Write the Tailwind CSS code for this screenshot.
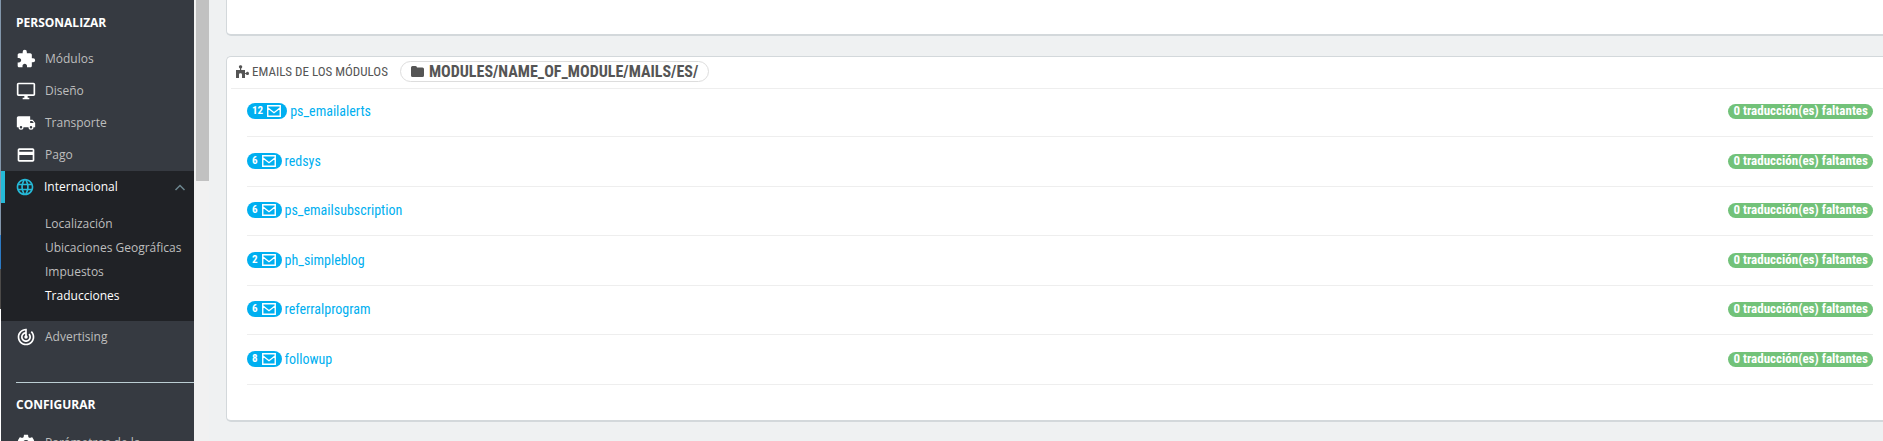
<!DOCTYPE html>
<html lang="es">
<head>
<meta charset="utf-8">
<meta name="viewport" content="width=device-width, initial-scale=1">
<title>Traducciones</title>
<script src="https://cdn.jsdelivr.net/npm/@tailwindcss/browser@4"></script>
</head>
<body class="flex h-screen overflow-hidden bg-[#eff1f2] font-['Ubuntu_Condensed','Roboto_Condensed','Liberation_Sans_Narrow','Open_Sans_Condensed',sans-serif] text-[#555]">
<svg class="hidden">
  <symbol id="mail" viewBox="0 0 14 12"><path d="M.75.75h12.5v10.5H.75zM1 3l6 4.7L13 3" fill="none" stroke="currentColor" stroke-width="1.4"/></symbol>
</svg>

<div class="flex w-px shrink-0 flex-col">
  <div class="h-[235px] bg-[#8296ab]"></div>
  <div class="h-[34px] bg-[#2c7ac4]"></div>
  <div class="h-10 bg-[#4c4a48]"></div>
  <div class="grow bg-white"></div>
</div>

<nav class="w-[193px] shrink-0 overflow-hidden bg-[#363a41] font-['Open_Sans',sans-serif] text-xs text-[#bebebe]">
  <h2 class="flex h-[43px] items-center pt-[2px] pl-[15px] font-bold text-white">PERSONALIZAR</h2>
  <a href="#" class="flex h-8 items-center gap-[9px] pl-[15px]"><svg class="size-5 text-white" viewBox="0 0 24 24" fill="currentColor"><path d="M20.5 11H19V7c0-1.1-.9-2-2-2h-4V3.5a2.5 2.5 0 0 0-5 0V5H4c-1.100 0-1.990.9-1.990 2v3.800H3.500c1.490 0 2.700 1.210 2.700 2.700s-1.210 2.700-2.700 2.700H2V20c0 1.100.9 2 2 2h3.800v-1.500c0-1.490 1.210-2.700 2.700-2.700s2.700 1.210 2.700 2.700V22H17c1.100 0 2-.9 2-2v-4h1.500a2.500 2.500 0 0 0 0-5z"/></svg>Módulos</a>
  <a href="#" class="flex h-8 items-center gap-[9px] pl-[15px]"><svg class="size-5 text-white" viewBox="0 0 24 24" fill="currentColor"><path d="M21 2H3c-1.100 0-2 .9-2 2v12c0 1.100.9 2 2 2h7v2H8v2h8v-2h-2v-2h7c1.100 0 2-.9 2-2V4c0-1.100-.9-2-2-2zm0 14H3V4h18v12z"/></svg>Diseño</a>
  <a href="#" class="flex h-8 items-center gap-[9px] pl-[15px]"><svg class="size-5 text-white" viewBox="0 0 24 24" fill="currentColor"><path d="M20 8h-3V4H3c-1.100 0-2 .9-2 2v11h2a3 3 0 0 0 6 0h6a3 3 0 0 0 6 0h2v-5l-3-4zM6 18.500a1.500 1.500 0 1 1 0-3 1.500 1.500 0 0 1 0 3zm13.500-9 1.960 2.500H17V9.500h2.500zm-1.500 9a1.500 1.500 0 1 1 0-3 1.500 1.500 0 0 1 0 3z"/></svg>Transporte</a>
  <a href="#" class="flex h-8 items-center gap-[9px] pl-[15px]"><svg class="size-5 text-white" viewBox="0 0 24 24" fill="currentColor"><path d="M20 4H4c-1.110 0-1.990.89-1.990 2L2 18c0 1.110.89 2 2 2h16c1.110 0 2-.89 2-2V6c0-1.110-.89-2-2-2zm0 14H4v-6h16v6zm0-10H4V6h16v2z"/></svg>Pago</a>
  <div class="h-[150px] bg-[#202226]">
    <a href="#" class="flex h-8 items-center gap-[9px] border-l-4 border-[#25b9d7] pr-2 pl-[10px] text-white"><svg class="size-5 text-[#25b9d7]" viewBox="0 0 24 24" fill="currentColor"><path d="M11.990 2C6.470 2 2 6.480 2 12s4.470 10 9.990 10C17.520 22 22 17.520 22 12S17.520 2 11.990 2zm6.930 6h-2.950c-.32-1.250-.78-2.450-1.380-3.560 1.840.63 3.370 1.910 4.330 3.560zM12 4.040c.83 1.200 1.480 2.530 1.910 3.960h-3.820c.43-1.430 1.080-2.760 1.910-3.960zM4.260 14C4.100 13.360 4 12.690 4 12s.1-1.360.26-2h3.380c-.08.66-.14 1.320-.14 2s.06 1.340.14 2H4.260zm.82 2h2.950c.32 1.250.78 2.450 1.380 3.560-1.840-.63-3.370-1.900-4.330-3.560zm2.950-8H5.080c.96-1.660 2.490-2.930 4.330-3.560C8.810 5.550 8.350 6.750 8.030 8zM12 19.960c-.83-1.200-1.480-2.530-1.910-3.960h3.820c-.43 1.430-1.080 2.760-1.910 3.960zM14.340 14H9.660c-.09-.66-.16-1.320-.16-2s.07-1.350.16-2h4.680c.09.65.16 1.320.16 2s-.07 1.340-.16 2zm.25 5.560c.6-1.110 1.060-2.310 1.380-3.560h2.950c-.96 1.650-2.490 2.930-4.330 3.560zM16.360 14c.08-.66.14-1.320.14-2s-.06-1.340-.14-2h3.380c.16.64.26 1.310.26 2s-.1 1.360-.26 2h-3.380z"/></svg>Internacional<svg class="ml-auto h-[7px] w-3 text-[#6c868e]" viewBox="0 0 12 7"><path d="m1.500 6 4.500-4.500L10.500 6" fill="none" stroke="currentColor" stroke-width="1.500"/></svg></a>
    <div class="flex flex-col pt-[9px] pl-11 leading-6 whitespace-nowrap">
      <a href="#">Localización</a>
      <a href="#">Ubicaciones Geográficas</a>
      <a href="#">Impuestos</a>
      <a href="#" class="text-white">Traducciones</a>
    </div>
  </div>
  <a href="#" class="flex h-8 items-center gap-[9px] pl-[15px]"><svg class="size-5 text-white" viewBox="0 0 24 24" fill="currentColor"><path d="M19.070 4.930l-1.410 1.410C19.100 7.790 20 9.790 20 12c0 4.420-3.580 8-8 8s-8-3.580-8-8c0-4.080 3.050-7.440 7-7.930v2.020C8.160 6.570 6 9.030 6 12c0 3.310 2.690 6 6 6s6-2.690 6-6c0-1.660-.67-3.160-1.760-4.240l-1.410 1.410C15.550 9.900 16 10.900 16 12c0 2.210-1.790 4-4 4s-4-1.790-4-4c0-1.860 1.280-3.410 3-3.860v2.140c-.6.350-1 .98-1 1.720 0 1.100.9 2 2 2s2-.9 2-2c0-.74-.4-1.380-1-1.720V2h-1C6.480 2 2 6.480 2 12s4.480 10 10 10 10-4.480 10-10c0-2.760-1.120-5.260-2.930-7.070z"/></svg>Advertising</a>
  <div class="mt-[29px] ml-[15px] h-px bg-[#bbcdd2]"></div>
  <h2 class="flex h-11 items-center pl-[15px] font-bold text-white">CONFIGURAR</h2>
  <a href="#" class="flex h-8 items-center gap-[9px] pl-[15px]"><svg class="size-5 text-white" viewBox="0 0 24 24" fill="currentColor"><path d="M19.430 12.980c.04-.32.07-.64.07-.98s-.03-.66-.07-.98l2.110-1.650c.19-.15.24-.42.12-.64l-2-3.460c-.12-.22-.39-.3-.61-.22l-2.490 1c-.52-.4-1.080-.73-1.690-.98l-.38-2.650A.488.488 0 0 0 14 2h-4c-.25 0-.46.18-.49.42l-.38 2.650c-.61.25-1.170.59-1.690.98l-2.490-1c-.23-.09-.49 0-.61.22l-2 3.460c-.13.22-.07.49.12.64l2.110 1.650c-.04.32-.07.65-.07.98s.03.66.07.98l-2.110 1.650c-.19.15-.24.42-.12.64l2 3.460c.12.22.39.3.61.22l2.490-1c.52.4 1.080.73 1.690.98l.38 2.650c.03.24.24.42.49.42h4c.25 0 .46-.18.49-.42l.38-2.650c.61-.25 1.170-.59 1.690-.98l2.490 1c.23.09.49 0 .61-.22l2-3.460c.12-.22.07-.49-.12-.64l-2.110-1.650zM12 15.500a3.500 3.500 0 1 1 0-7 3.500 3.500 0 0 1 0 7z"/></svg>Parámetros de la</a>
</nav>

<div class="w-[15px] shrink-0 bg-[#f1f1f1] pl-0.5"><div class="h-[181px] bg-[#c1c1c1]"></div></div>

<main class="flex min-w-0 grow flex-col pl-[17px]">
  <section class="h-9 shrink-0 rounded-bl-[5px] border-b-2 border-l border-[#d3d8db] bg-white"></section>
  <section class="mt-5 rounded-l-[5px] border-y border-l border-b-2 border-[#d3d8db] bg-white pb-[35px] pl-1">
    <h3 class="flex h-8 items-center border-b border-[#eee] pb-[2px] pl-[5px] text-[13px] whitespace-nowrap">
      <svg class="mr-[3px] h-[13px] w-[13px] shrink-0" viewBox="0 0 13 13" fill="currentColor"><path d="M0 5h4V3.500C3 3 2.700 2.200 2.900 1.400c.4-1.500 2.900-1.500 3.300 0 .2.800-.1 1.600-1 2.100V5H9v3c.6 0 .9-.2 1.200-.6.900-1 2.800-.6 2.800 1s-1.900 2-2.800 1C9.900 9 9.600 8.800 9 8.800V13H6V9.500c0-1.700-3-1.700-3 0V13H0z"/></svg>
      <span>EMAILS DE LOS MÓDULOS</span>
      <span class="ml-3 flex h-[21px] items-center gap-[5px] rounded-full border border-[#ddd] px-[10px] text-base font-bold"><svg class="h-[11px] w-[13px]" viewBox="0 0 13 11" fill="currentColor"><path d="M0 1.500Q0 0 1.500 0h3Q6 0 6 1.500h5.500Q13 1.500 13 3v6.500Q13 11 11.500 11h-10Q0 11 0 9.500z"/></svg>MODULES/NAME_OF_MODULE/MAILS/ES/</span>
    </h3>
    <ul class="pr-[10px] pl-4 text-sm text-[#00aff0]">
      <li class="flex h-12 items-end justify-between border-b border-[#eee] pb-[17px]"><a href="#" class="flex h-4 items-center gap-[3px]"><span class="flex h-4 items-center gap-1 rounded-full bg-[#00aff0] pr-[6px] pl-[5px] text-[11px] font-bold text-white">12<svg class="h-3 w-[14px]"><use href="#mail"/></svg></span>ps_emailalerts</a><span class="flex h-[15px] items-center rounded-full bg-[#72c279] px-[5px] text-[13px] font-bold text-white">0 traducción(es) faltantes</span></li>
      <li class="flex h-[50px] items-end justify-between border-b border-[#eee] pb-[17px]"><a href="#" class="flex h-4 items-center gap-[3px]"><span class="flex h-4 items-center gap-1 rounded-full bg-[#00aff0] pr-[6px] pl-[5px] text-[11px] font-bold text-white">6<svg class="h-3 w-[14px]"><use href="#mail"/></svg></span>redsys</a><span class="flex h-[15px] items-center rounded-full bg-[#72c279] px-[5px] text-[13px] font-bold text-white">0 traducción(es) faltantes</span></li>
      <li class="flex h-[49px] items-end justify-between border-b border-[#eee] pb-[17px]"><a href="#" class="flex h-4 items-center gap-[3px]"><span class="flex h-4 items-center gap-1 rounded-full bg-[#00aff0] pr-[6px] pl-[5px] text-[11px] font-bold text-white">6<svg class="h-3 w-[14px]"><use href="#mail"/></svg></span>ps_emailsubscription</a><span class="flex h-[15px] items-center rounded-full bg-[#72c279] px-[5px] text-[13px] font-bold text-white">0 traducción(es) faltantes</span></li>
      <li class="flex h-[50px] items-end justify-between border-b border-[#eee] pb-[17px]"><a href="#" class="flex h-4 items-center gap-[3px]"><span class="flex h-4 items-center gap-1 rounded-full bg-[#00aff0] pr-[6px] pl-[5px] text-[11px] font-bold text-white">2<svg class="h-3 w-[14px]"><use href="#mail"/></svg></span>ph_simpleblog</a><span class="flex h-[15px] items-center rounded-full bg-[#72c279] px-[5px] text-[13px] font-bold text-white">0 traducción(es) faltantes</span></li>
      <li class="flex h-[49px] items-end justify-between border-b border-[#eee] pb-[17px]"><a href="#" class="flex h-4 items-center gap-[3px]"><span class="flex h-4 items-center gap-1 rounded-full bg-[#00aff0] pr-[6px] pl-[5px] text-[11px] font-bold text-white">6<svg class="h-3 w-[14px]"><use href="#mail"/></svg></span>referralprogram</a><span class="flex h-[15px] items-center rounded-full bg-[#72c279] px-[5px] text-[13px] font-bold text-white">0 traducción(es) faltantes</span></li>
      <li class="flex h-[50px] items-end justify-between border-b border-[#eee] pb-[17px]"><a href="#" class="flex h-4 items-center gap-[3px]"><span class="flex h-4 items-center gap-1 rounded-full bg-[#00aff0] pr-[6px] pl-[5px] text-[11px] font-bold text-white">8<svg class="h-3 w-[14px]"><use href="#mail"/></svg></span>followup</a><span class="flex h-[15px] items-center rounded-full bg-[#72c279] px-[5px] text-[13px] font-bold text-white">0 traducción(es) faltantes</span></li>
    </ul>
  </section>
</main>
</body>
</html>
